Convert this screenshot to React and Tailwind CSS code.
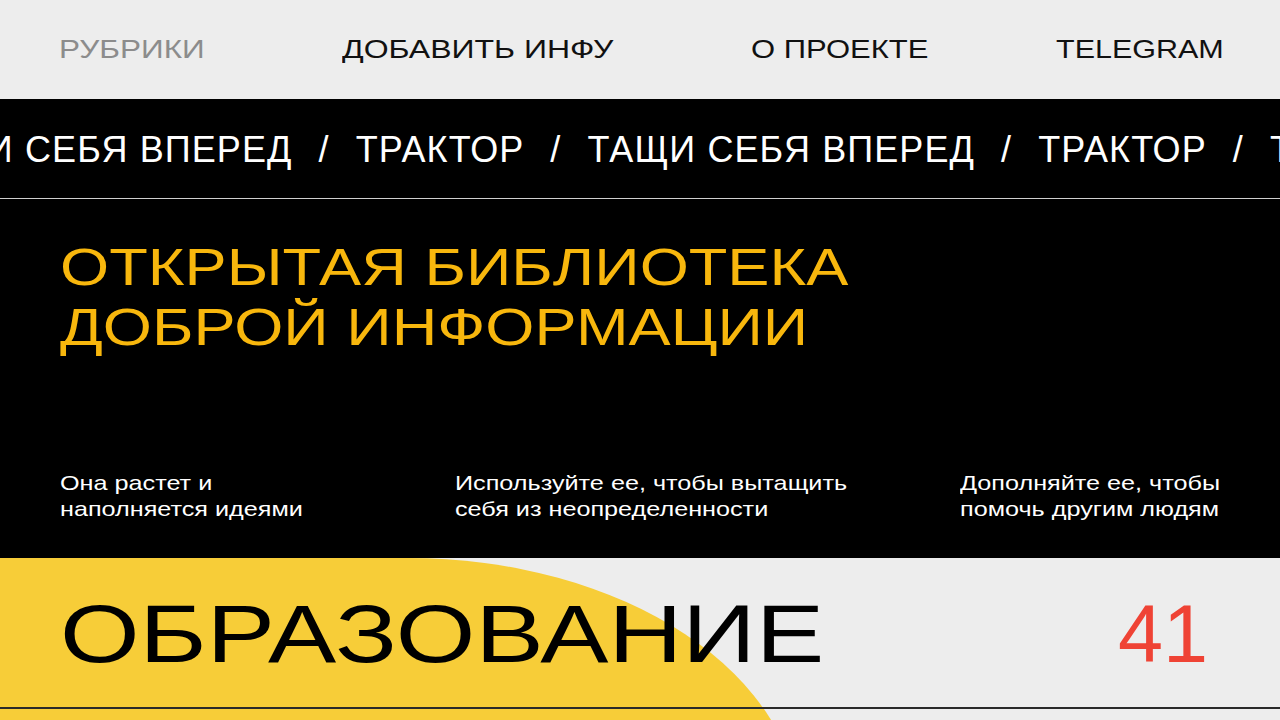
const navItems = [
  { label: 'РУБРИКИ', scale: 'scale-x-[1.26]', muted: true },
  { label: 'ДОБАВИТЬ ИНФУ', scale: 'scale-x-[1.28]' },
  { label: 'О ПРОЕКТЕ', scale: 'scale-x-[1.24]' },
  { label: 'TELEGRAM', scale: 'scale-x-[1.22]' },
]

const ticker = ['ТАЩИ СЕБЯ ВПЕРЕД', 'ТРАКТОР', 'ТАЩИ СЕБЯ ВПЕРЕД', 'ТРАКТОР', 'ТАЩИ СЕБЯ ВПЕРЕД']

const features = [
  ['Она растет и', 'наполняется идеями'],
  ['Используйте ее, чтобы вытащить', 'себя из неопределенности'],
  ['Дополняйте ее, чтобы', 'помочь другим людям'],
]

const font = { fontFamily: '"Liberation Sans", Arial, sans-serif' }

export default function App() {
  return (
    <div className="w-[1280px] h-[720px] overflow-hidden bg-[#ededed]" style={font}>
      {/* Шапка */}
      <header className="h-[99px] bg-[#ededed] grid grid-cols-[283px_409px_305px_1fr] items-center pl-[59px]">
        {navItems.map((item) => (
          <div key={item.label} className="pt-[2px]">
            <span
              className={`inline-block whitespace-nowrap origin-left ${item.scale} text-[25px] leading-none ${
                item.muted ? 'text-[#8c8c8c]' : 'text-[#111]'
              }`}
            >
              {item.label}
            </span>
          </div>
        ))}
      </header>

      {/* Бегущая строка */}
      <div className="h-[100px] bg-black border-b border-[#cfcfcf] overflow-hidden flex items-center">
        <div className="flex items-center gap-[26px] ml-[-95px] pt-[2px] whitespace-nowrap text-white text-[36px] leading-none tracking-[1.1px]">
          {ticker.map((t, i) => (
            <div key={i} className="flex items-center gap-[26px]">
              <span>{t}</span>
              <span>/</span>
            </div>
          ))}
        </div>
      </div>

      {/* Главный блок */}
      <section className="h-[359px] bg-black flex flex-col justify-between px-[60px] pt-[38px] pb-[36px]">
        <h1 className="text-[#f8b70d] text-[52px] leading-[60px] font-normal">
          <span className="block origin-left scale-x-[1.215] whitespace-nowrap">ОТКРЫТАЯ БИБЛИОТЕКА</span>
          <span className="block origin-left scale-x-[1.215] whitespace-nowrap">ДОБРОЙ ИНФОРМАЦИИ</span>
        </h1>
        <div className="grid grid-cols-[395px_505px_1fr] text-white text-[21px] leading-[26px]">
          {features.map((lines, i) => (
            <p key={i}>
              {lines.map((l) => (
                <span key={l} className="block origin-left scale-x-[1.2] whitespace-nowrap">
                  {l}
                </span>
              ))}
            </p>
          ))}
        </div>
      </section>

      {/* Рубрика */}
      <section className="relative h-[162px] bg-[#ededed] overflow-hidden">
        <div className="absolute left-0 top-0 w-[800px] h-[400px] bg-[#f7cd38] rounded-tr-[392px_260px]" />
        <div className="relative h-[151px] border-b-2 border-[#2a2a2a] flex items-center justify-between px-[60px] pt-[4px]">
          <span className="inline-block origin-left scale-x-[1.263] whitespace-nowrap text-[81px] leading-none text-black">
            ОБРАЗОВАНИЕ
          </span>
          <span className="inline-block text-[81px] leading-none text-[#ef4335] mr-[12px]">41</span>
        </div>
      </section>
    </div>
  )
}
